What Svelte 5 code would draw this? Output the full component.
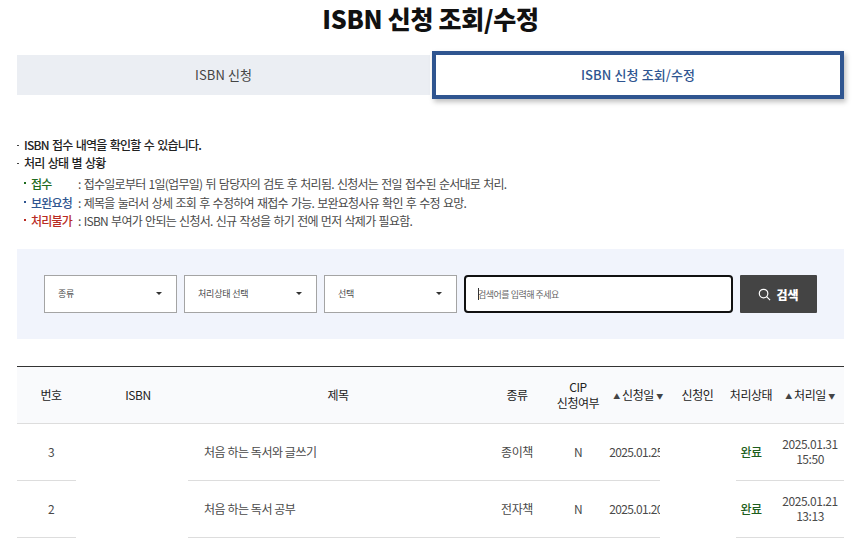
<script>
  let rows = [
    { no: 3, title: '처음 하는 독서와 글쓰기', kind: '종이책', cip: 'N', date: '2025.01.25', status: '완료', done: ['2025.01.31', '15:50'] },
    { no: 2, title: '처음 하는 독서 공부', kind: '전자책', cip: 'N', date: '2025.01.20', status: '완료', done: ['2025.01.21', '13:13'] }
  ];
  const selects = ['종류', '처리상태 선택', '선택'];
</script>

<div class="page">
  <h1>ISBN 신청 조회/수정</h1>

  <div class="tabs">
    <button class="tab">ISBN 신청</button>
    <button class="tab active">ISBN 신청 조회/수정</button>
  </div>

  <div class="notes">
    <p class="lead">ISBN 접수 내역을 확인할 수 있습니다.</p>
    <p class="lead">처리 상태 별 상황</p>
    <ul>
      <li class="green"><b>접수</b><span>: 접수일로부터 1일(업무일) 뒤 담당자의 검토 후 처리됨. 신청서는 전일 접수된 순서대로 처리.</span></li>
      <li class="blue"><b>보완요청</b><span>: 제목을 눌러서 상세 조회 후 수정하여 재접수 가능. 보완요청사유 확인 후 수정 요망.</span></li>
      <li class="red"><b>처리불가</b><span>: ISBN 부여가 안되는 신청서. 신규 작성을 하기 전에 먼저 삭제가 필요함.</span></li>
    </ul>
  </div>

  <div class="search">
    {#each selects as label}
      <div class="select">{label}<i class="caret"></i></div>
    {/each}
    <div class="field">
      <i class="cursor"></i>
      <input type="text" placeholder="검색어를 입력해 주세요" />
    </div>
    <button class="go">
      <svg width="13" height="13" viewBox="0 0 14 14" fill="none" stroke="#fff" stroke-width="1.3">
        <circle cx="6" cy="6" r="4.6" />
        <path d="M9.3 9.3 L13 13" />
      </svg>
      검색
    </button>
  </div>

  <div class="tablewrap">
    <table>
      <colgroup>
        <col style="width:68px" />
        <col style="width:106px" />
        <col style="width:294px" />
        <col style="width:64px" />
        <col style="width:58px" />
        <col style="width:62px" />
        <col style="width:57px" />
        <col style="width:50px" />
        <col style="width:68px" />
      </colgroup>
      <thead>
        <tr>
          <th>번호</th>
          <th>ISBN</th>
          <th>제목</th>
          <th>종류</th>
          <th>CIP<br />신청여부</th>
          <th class="sort"><small>▲</small> 신청일 <small>▼</small></th>
          <th>신청인</th>
          <th>처리상태</th>
          <th class="sort"><small>▲</small> 처리일 <small>▼</small></th>
        </tr>
      </thead>
      <tbody>
        {#each rows as row}
          <tr>
            <td>{row.no}</td>
            <td></td>
            <td class="title">{row.title}</td>
            <td>{row.kind}</td>
            <td>{row.cip}</td>
            <td class="date">{row.date}</td>
            <td></td>
            <td class="status">{row.status}</td>
            <td>{row.done[0]}<br />{row.done[1]}</td>
          </tr>
        {/each}
      </tbody>
    </table>
    <div class="mask isbn"></div>
    <div class="mask applicant"></div>
  </div>
</div>

<style>
  :global(body) {
    background: #fff;
    overflow: hidden;
  }
  .page {
    width: 827px;
    height: 543px;
    margin-left: 17px;
    font-family: "Noto Sans CJK KR", "Noto Sans", sans-serif;
    font-size: 12px;
    color: #4a4a4a;
    letter-spacing: -0.45px;
  }
  h1 {
    margin: 0;
    height: 51px;
    padding-top: 1px;
    box-sizing: border-box;
    font-size: 25px;
    line-height: 34px;
    font-weight: 900;
    text-align: center;
    color: #111;
    letter-spacing: -0.3px;
  }
  .tabs {
    display: flex;
    align-items: center;
    height: 48px;
  }
  .tab {
    flex: 1;
    height: 40px;
    border: none;
    background: #ebeef3;
    color: #444;
    font: inherit;
    font-size: 13px;
    letter-spacing: 0.1px;
    padding: 0 0 2px;
  }
  .tab.active {
    height: 48px;
    background: #fff;
    border: 4px solid #2f5590;
    color: #2f5590;
    font-weight: 500;
    box-shadow: 2px 3px 5px rgba(0, 0, 0, 0.25);
    margin-left: 2px;
    flex: 0 0 412px;
  }
  .notes {
    padding-top: 37px;
    height: 150px;
    box-sizing: border-box;
    letter-spacing: -0.75px;
    word-spacing: 1.2px;
  }
  .notes p {
    margin: 0;
    line-height: 18px;
    padding-left: 7px;
    color: #222;
    font-weight: 500;
    position: relative;
  }
  .notes p::before {
    content: "";
    position: absolute;
    left: 0;
    top: 9px;
    width: 2px;
    height: 1px;
    background: #444;
  }
  ul {
    list-style: none;
    margin: 2px 0 0;
    padding: 0 0 0 7px;
  }
  li {
    display: flex;
    height: 18.5px;
    line-height: 19px;
  }
  li b {
    width: 54px;
    padding-left: 7px;
    box-sizing: border-box;
    font-weight: 500;
    position: relative;
    flex: none;
  }
  li b::before {
    content: "";
    position: absolute;
    left: 0;
    top: 8px;
    width: 2px;
    height: 2px;
    background: currentColor;
  }
  .green b { color: #1d6b1d; }
  .blue b { color: #2f5590; }
  .red b { color: #b92c24; }
  .search {
    display: flex;
    gap: 7px;
    height: 90px;
    padding: 26px 27px;
    box-sizing: border-box;
    background: #f1f4fc;
  }
  .select {
    position: relative;
    width: 133px;
    height: 38px;
    box-sizing: border-box;
    border: 1px solid #a4a4a4;
    background: #fff;
    padding-left: 13px;
    font-size: 9px;
    letter-spacing: -0.2px;
    line-height: 35px;
    flex: none;
  }
  .caret {
    position: absolute;
    right: 14px;
    top: 16px;
    border-left: 3.5px solid transparent;
    border-right: 3.5px solid transparent;
    border-top: 3.5px solid #333;
  }
  .field {
    position: relative;
    width: 269px;
    height: 38px;
    box-sizing: border-box;
    border: 2px solid #111;
    border-radius: 4px;
    background: #fff;
    flex: none;
  }
  .field input {
    width: 100%;
    height: 100%;
    box-sizing: border-box;
    border: none;
    outline: none;
    background: transparent;
    padding: 1px 0 0 12px;
    font: inherit;
    font-size: 9px;
    letter-spacing: -0.5px;
  }
  .field input::placeholder {
    color: #666;
    opacity: 1;
  }
  .cursor {
    position: absolute;
    left: 12px;
    top: 11px;
    width: 1px;
    height: 12px;
    background: #333;
  }
  .go {
    display: flex;
    align-items: center;
    justify-content: center;
    gap: 5px;
    width: 77px;
    height: 38px;
    flex: none;
    border: none;
    border-radius: 1px;
    background: #444;
    color: #fff;
    font: inherit;
    font-size: 12px;
    font-weight: 900;
    padding: 0;
  }
  .tablewrap {
    position: relative;
    margin-top: 27px;
  }
  table {
    width: 827px;
    table-layout: fixed;
    border-collapse: collapse;
    border-top: 1px solid #333;
  }
  th {
    height: 56px;
    padding: 0;
    background: #f9fafc;
    border-bottom: 1px solid #ddd;
    font-size: 12px;
    font-weight: 400;
    line-height: 16px;
    color: #222;
    text-align: center;
    white-space: nowrap;
  }
  th small {
    font-size: 7px;
    color: #444;
    vertical-align: 1px;
  }
  td {
    height: 57px;
    box-sizing: border-box;
    padding: 0 0 2px;
    border-bottom: 1px solid #ddd;
    text-align: center;
    line-height: 15px;
    white-space: nowrap;
  }
  td.title {
    text-align: left;
    padding-left: 13px;
  }
  td.date {
    letter-spacing: -0.65px;
    padding-right: 4px;
  }
  td.status {
    color: #1d5e1d;
    font-weight: 500;
  }
  .mask {
    position: absolute;
    top: 58px;
    bottom: -2px;
    background: #fff;
  }
  .isbn {
    left: 59px;
    width: 112px;
  }
  .applicant {
    left: 643px;
    width: 76px;
  }
</style>
